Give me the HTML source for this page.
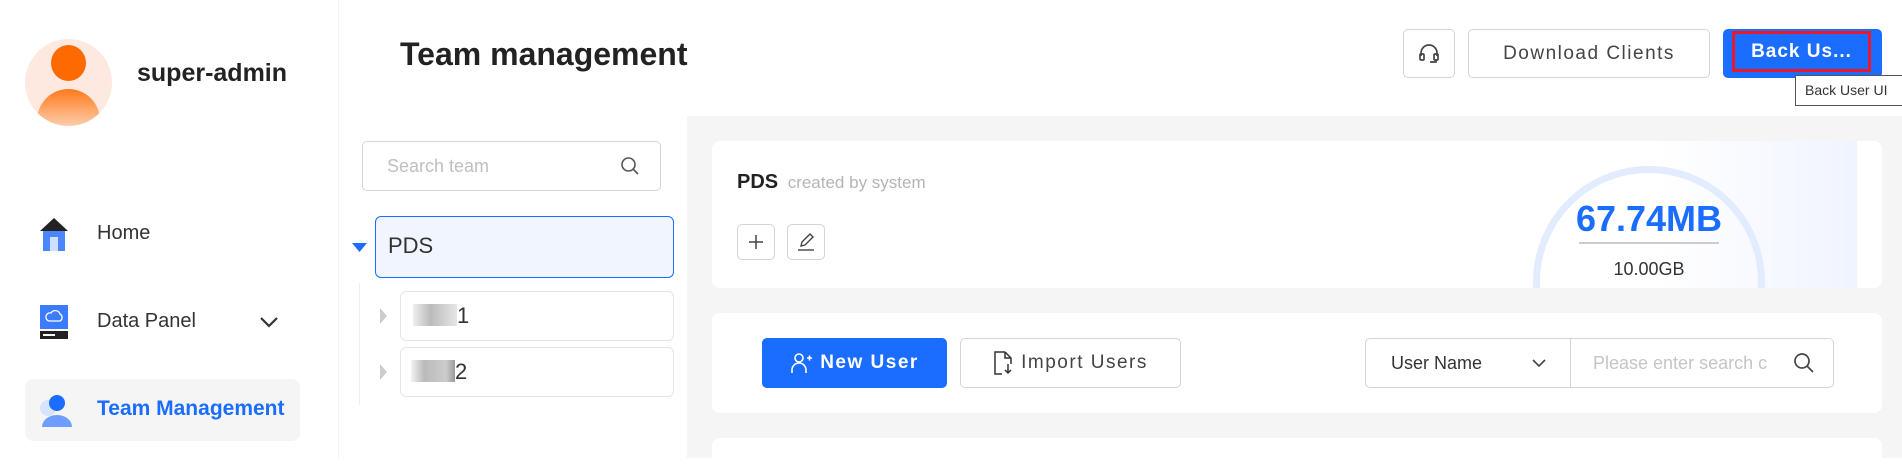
<!DOCTYPE html>
<html><head><meta charset="utf-8"><style>
*{margin:0;padding:0;box-sizing:border-box}
body{width:1902px;height:458px;overflow:hidden;background:#fff;font-family:"Liberation Sans",sans-serif;position:relative;color:#222}
.a{position:absolute}
.btn{position:absolute;border:1px solid #d4d4d4;border-radius:5px;background:#fff;display:flex;align-items:center;justify-content:center}
</style></head><body>
<div class="a" style="left:338px;top:0;width:1px;height:458px;background:#f3f3f3"></div>
<div class="a" style="left:25px;top:39px;width:87px;height:87px;border-radius:50%;background:#fde9df;overflow:hidden">
 <div class="a" style="left:26px;top:6px;width:35px;height:36px;border-radius:50%;background:#ff6a00"></div>
 <div class="a" style="left:12px;top:50px;width:63px;height:50px;border-radius:32px 32px 0 0;background:linear-gradient(#ff7a1a,#fde9df)"></div>
</div>
<div class="a" style="left:137px;top:59px;font-size:25px;font-weight:bold;color:#222">super-admin</div>
<svg class="a" style="left:40px;top:218px" width="28" height="33"><polygon points="0,13 14,0 28,13" fill="#222"/><rect x="3" y="13" width="22" height="20" fill="#4a86ff"/><rect x="10" y="19" width="8" height="14" fill="#cfe0ff"/></svg>
<div class="a" style="left:97px;top:222px;font-size:20px;color:#333">Home</div>
<svg class="a" style="left:40px;top:305px" width="28" height="34"><rect x="0" y="0" width="28" height="24" fill="#3a7bff"/><path d="M9 16h11a4 4 0 0 0 0-7 5 5 0 0 0-9-1 4 4 0 0 0-2 8z" fill="none" stroke="#fff" stroke-width="1.3"/><rect x="0" y="26" width="28" height="8" fill="#222"/><rect x="3" y="29" width="12" height="2" fill="#fff"/></svg>
<div class="a" style="left:97px;top:310px;font-size:20px;color:#333">Data Panel</div>
<svg class="a" style="left:259px;top:316px" width="20" height="13"><path d="M2 2l8 8 8-8" fill="none" stroke="#333" stroke-width="2.2"/></svg>
<div class="a" style="left:25px;top:379px;width:275px;height:62px;border-radius:8px;background:#f5f5f5"></div>
<svg class="a" style="left:38px;top:395px" width="34" height="32"><circle cx="10" cy="13" r="8" fill="#d6e4ff"/><circle cx="19" cy="8" r="8" fill="#1a6dff"/><path d="M4 32a15 12 0 0 1 30 0z" fill="#6d9eff"/></svg>
<div class="a" style="left:97px;top:397px;font-size:21px;font-weight:bold;color:#1a6dff">Team Management</div>
<div class="a" style="left:400px;top:36px;font-size:32px;font-weight:bold;color:#222">Team management</div>
<div class="btn" style="left:1403px;top:29px;width:52px;height:49px"><svg width="22" height="22" viewBox="0 0 22 22" fill="none" stroke="#444" stroke-width="1.7"><path d="M3 13V10a8 8 0 0 1 16 0v3"/><rect x="2" y="11" width="4" height="6" rx="1"/><rect x="16" y="11" width="4" height="6" rx="1"/><path d="M18 17v2h-6"/></svg></div>
<div class="btn" style="left:1468px;top:29px;width:242px;height:49px;font-size:19px;letter-spacing:1.5px;color:#444">Download Clients</div>
<div class="a" style="left:1723px;top:29px;width:159px;height:49px;border-radius:5px;background:#1a6dff"></div>
<div class="a" style="left:1732px;top:31px;width:139px;height:41px;border:3px solid #e8192c;color:#fff;font-size:19px;font-weight:bold;letter-spacing:1px;display:flex;align-items:center;justify-content:center">Back Us...</div>
<div class="a" style="left:1795px;top:75px;width:120px;height:31px;border:1px solid #555;background:#fff;font-size:14px;color:#333;padding:6px 0 0 9px">Back User UI</div>
<div class="btn" style="left:362px;top:141px;width:299px;height:50px;justify-content:space-between;padding:0 20px 0 24px;font-size:18px;color:#c0c0c0">Search team<svg width="20" height="20" fill="none" stroke="#555" stroke-width="1.6"><circle cx="8.5" cy="8.5" r="6.5"/><path d="M13 13l5 5"/></svg></div>
<svg class="a" style="left:352px;top:243px" width="15" height="10"><polygon points="0,0 15,0 7.5,9" fill="#1a6dff"/></svg>
<div class="a" style="left:375px;top:216px;width:299px;height:62px;border:1.5px solid #1a6dff;border-radius:6px;background:#f0f5ff;font-size:22px;color:#333;padding:16px 0 0 12px">PDS</div>
<div class="a" style="left:359px;top:283px;width:1px;height:122px;background:#eee"></div>
<svg class="a" style="left:380px;top:308px" width="8" height="16"><polygon points="0,0 7,8 0,16" fill="#ccc"/></svg>
<svg class="a" style="left:380px;top:364px" width="8" height="16"><polygon points="0,0 7,8 0,16" fill="#ccc"/></svg>
<div class="a" style="left:400px;top:291px;width:274px;height:50px;border:1px solid #e5e5e5;border-radius:6px;font-size:22px;color:#333;padding:11px 0 0 12px"><span style="display:inline-block;width:44px;height:22px;background:linear-gradient(90deg,#eee,#bbb 40%,#e6e6e6);vertical-align:-3px"></span>1</div>
<div class="a" style="left:400px;top:347px;width:274px;height:50px;border:1px solid #e5e5e5;border-radius:6px;font-size:22px;color:#333;padding:11px 0 0 10px"><span style="display:inline-block;width:44px;height:22px;background:linear-gradient(90deg,#f2f2f2,#bbb 30%,#ccc 80%,#999);vertical-align:-3px"></span>2</div>
<div class="a" style="left:687px;top:116px;width:1215px;height:342px;background:#f5f5f5"></div>
<div class="a" style="left:712px;top:141px;width:1170px;height:147px;background:#fff;border-radius:8px;overflow:hidden">
 <div class="a" style="left:943px;top:0;width:202px;height:147px;background:linear-gradient(90deg,#fff,#f0f4ff)"></div>
 <div class="a" style="left:821px;top:25px;width:232px;height:232px;border-radius:50%;border:7px solid #e3ebff"></div>
 <div class="a" style="left:821px;top:57px;width:232px;text-align:center;font-size:36px;font-weight:bold;color:#1a6dff">67.74MB</div>
 <div class="a" style="left:867px;top:101px;width:140px;height:2px;background:#ccc"></div>
 <div class="a" style="left:821px;top:118px;width:232px;text-align:center;font-size:18px;color:#333">10.00GB</div>
 <div class="a" style="left:25px;top:30px;font-size:20px;font-weight:bold;color:#222">PDS <span style="font-weight:normal;font-size:17px;color:#b5b5b5;margin-left:4px">created by system</span></div>
</div>
<div class="btn" style="left:737px;top:224px;width:38px;height:36px"><svg width="16" height="16" stroke="#444" stroke-width="1.5"><path d="M8 1v14M1 8h14"/></svg></div>
<div class="btn" style="left:787px;top:224px;width:38px;height:36px"><svg width="20" height="20" fill="none" stroke="#444" stroke-width="1.4"><path d="M5 14l1-4 8-8 3 3-8 8z"/><path d="M2 18h16"/></svg></div>
<div class="a" style="left:712px;top:313px;width:1170px;height:100px;background:#fff;border-radius:8px"></div>
<div class="a" style="left:762px;top:338px;width:185px;height:50px;border-radius:5px;background:#1a6dff;color:#fff;font-size:19px;font-weight:bold;letter-spacing:1.5px;display:flex;align-items:center;justify-content:center;gap:8px"><svg width="22" height="22" fill="none" stroke="#fff" stroke-width="1.6"><circle cx="9" cy="6" r="4"/><path d="M2 21v-3a7 7 0 0 1 14 0v3M17 6h5M19.5 3.5v5"/></svg>New User</div>
<div class="btn" style="left:960px;top:338px;width:221px;height:50px;font-size:19px;letter-spacing:1.5px;color:#444;gap:8px"><svg width="20" height="24" fill="none" stroke="#333" stroke-width="1.5"><path d="M12 1H2v22h7M12 1l6 6v6M12 1v6h6M15 13v9M12 19l3 3 3-3"/></svg>Import Users</div>
<div class="btn" style="left:1365px;top:338px;width:206px;height:50px;justify-content:space-between;padding:0 24px 0 25px;font-size:18px;color:#333;border-radius:5px 0 0 5px">User Name<svg width="14" height="10" fill="none" stroke="#444" stroke-width="1.6"><path d="M1 2l6 6 6-6"/></svg></div>
<div class="btn" style="left:1570px;top:338px;width:264px;height:50px;justify-content:space-between;padding:0 18px 0 22px;font-size:18px;color:#c5c5c5;border-radius:0 5px 5px 0;white-space:nowrap;overflow:hidden">Please enter search c<svg width="22" height="22" fill="none" stroke="#444" stroke-width="1.7" style="flex:none"><circle cx="9" cy="9" r="7"/><path d="M14 14l6 6"/></svg></div>
<div class="a" style="left:712px;top:438px;width:1170px;height:30px;background:#fff;border-radius:8px"></div>
</body></html>
